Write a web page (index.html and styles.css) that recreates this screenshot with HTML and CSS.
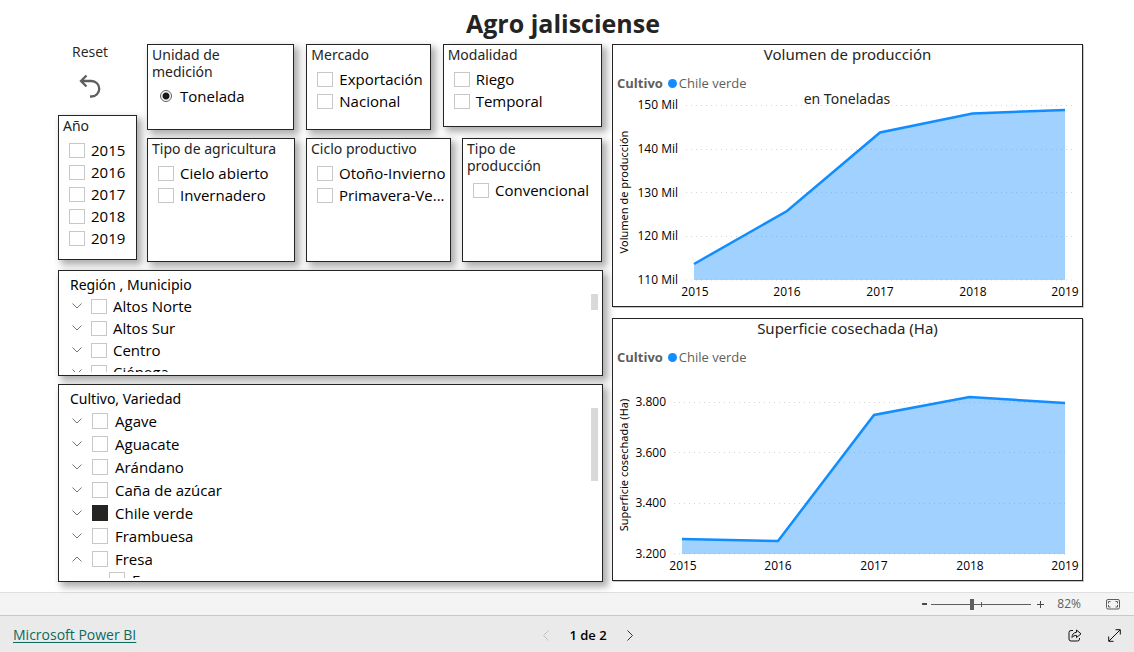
FILE: index.html
```html
<!DOCTYPE html>
<html lang="es">
<head>
<meta charset="utf-8">
<meta name="viewport" content="width=device-width, initial-scale=1">
<title>Agro jalisciense</title>
<link rel="stylesheet" href="styles.css">
</head>
<body>
<svg class="symbols" aria-hidden="true">
  <symbol id="chev" viewBox="0 0 10 6"><path d="M0.5 0.5 5 5 9.5 0.5" fill="none" stroke="currentColor"/></symbol>
</svg>
<main class="report">
  <h1 class="report-title">Agro jalisciense</h1>
  <div class="board">
    <div class="filters">
      <div class="top">
        <div class="side">
          <button class="reset" type="button">
            <span>Reset</span>
            <svg width="22" height="24" viewBox="0 0 22 24" fill="none" stroke="#605e5c" stroke-width="2.300"><path d="M7.500 1.500 2 7l5.500 5.500M2 7h10.500a7.500 7.500 0 0 1 0 15.500H11"/></svg>
          </button>
          <fieldset class="card year">
            <legend>Año</legend>
            <label class="opt"><input type="checkbox">2015</label>
            <label class="opt"><input type="checkbox">2016</label>
            <label class="opt"><input type="checkbox">2017</label>
            <label class="opt"><input type="checkbox">2018</label>
            <label class="opt"><input type="checkbox">2019</label>
          </fieldset>
        </div>
        <div class="slicers">
          <div class="row row-a">
            <fieldset class="card">
              <legend>Unidad de<br>medición</legend>
              <label class="opt"><input type="radio" name="unidad" checked>Tonelada</label>
            </fieldset>
            <fieldset class="card">
              <legend>Mercado</legend>
              <label class="opt"><input type="checkbox">Exportación</label>
              <label class="opt"><input type="checkbox">Nacional</label>
            </fieldset>
            <fieldset class="card short">
              <legend>Modalidad</legend>
              <label class="opt"><input type="checkbox">Riego</label>
              <label class="opt"><input type="checkbox">Temporal</label>
            </fieldset>
          </div>
          <div class="row row-b">
            <fieldset class="card">
              <legend>Tipo de agricultura</legend>
              <label class="opt"><input type="checkbox">Cielo abierto</label>
              <label class="opt"><input type="checkbox">Invernadero</label>
            </fieldset>
            <fieldset class="card">
              <legend>Ciclo productivo</legend>
              <label class="opt"><input type="checkbox">Otoño-Invierno</label>
              <label class="opt"><input type="checkbox">Primavera-Ve...</label>
            </fieldset>
            <fieldset class="card">
              <legend>Tipo de<br>producción</legend>
              <label class="opt"><input type="checkbox">Convencional</label>
            </fieldset>
          </div>
        </div>
      </div>
      <fieldset class="card tree region">
        <legend>Región , Municipio</legend>
        <div class="list">
          <label class="opt"><svg class="chev"><use href="#chev"/></svg><input type="checkbox">Altos Norte</label>
          <label class="opt"><svg class="chev"><use href="#chev"/></svg><input type="checkbox">Altos Sur</label>
          <label class="opt"><svg class="chev"><use href="#chev"/></svg><input type="checkbox">Centro</label>
          <label class="opt"><svg class="chev"><use href="#chev"/></svg><input type="checkbox">Ciénega</label>
        </div>
        <span class="thumb"></span>
      </fieldset>
      <fieldset class="card tree crop">
        <legend>Cultivo, Variedad</legend>
        <div class="list">
          <label class="opt"><svg class="chev"><use href="#chev"/></svg><input type="checkbox">Agave</label>
          <label class="opt"><svg class="chev"><use href="#chev"/></svg><input type="checkbox">Aguacate</label>
          <label class="opt"><svg class="chev"><use href="#chev"/></svg><input type="checkbox">Arándano</label>
          <label class="opt"><svg class="chev"><use href="#chev"/></svg><input type="checkbox">Caña de azúcar</label>
          <label class="opt"><svg class="chev"><use href="#chev"/></svg><input type="checkbox" checked>Chile verde</label>
          <label class="opt"><svg class="chev"><use href="#chev"/></svg><input type="checkbox">Frambuesa</label>
          <label class="opt"><svg class="chev open"><use href="#chev"/></svg><input type="checkbox">Fresa</label>
          <label class="opt child"><input type="checkbox">Fresa</label>
        </div>
        <span class="thumb"></span>
      </fieldset>
    </div>
    <div class="charts">
      <section class="chart">
        <h2>Volumen de producción</h2>
        <p class="key"><b>Cultivo</b><i class="dot"></i><span>Chile verde</span></p>
        <svg viewBox="0 0 469 211" role="img" aria-label="Volumen de producción en toneladas">
          <path class="grid" d="M73 10.500H459M73 54.500H459M73 97.500H459M73 141.500H459M73 185H459"/>
          <path class="area" d="M81 169 174 116 267 37.500 359.500 18.500 452 15V185H81Z"/>
          <path class="line" d="M81 169 174 116 267 37.500 359.500 18.500 452 15"/>
          <text class="sub" x="234" y="9">en Toneladas</text>
          <g class="ylab">
            <text x="65" y="14">150 Mil</text><text x="65" y="58">140 Mil</text><text x="65" y="102">130 Mil</text><text x="65" y="145">120 Mil</text><text x="65" y="189">110 Mil</text>
          </g>
          <g class="xlab">
            <text x="82" y="201">2015</text><text x="174" y="201">2016</text><text x="267" y="201">2017</text><text x="360" y="201">2018</text><text x="452" y="201">2019</text>
          </g>
          <text class="axis" transform="translate(15 97) rotate(-90)">Volumen de producción</text>
        </svg>
      </section>
      <section class="chart">
        <h2>Superficie cosechada (Ha)</h2>
        <p class="key"><b>Cultivo</b><i class="dot"></i><span>Chile verde</span></p>
        <svg viewBox="0 0 469 211" role="img" aria-label="Superficie cosechada en hectáreas">
          <path class="grid" d="M61 33.500H456M61 83.500H456M61 134.500H456M61 185H456"/>
          <path class="area" d="M69 170 165 172 261 46 356.500 28 452 34V185H69Z"/>
          <path class="line" d="M69 170 165 172 261 46 356.500 28 452 34"/>
          <g class="ylab">
            <text x="53" y="37">3.800</text><text x="53" y="88">3.600</text><text x="53" y="138">3.400</text><text x="53" y="189">3.200</text>
          </g>
          <g class="xlab">
            <text x="70" y="201">2015</text><text x="165" y="201">2016</text><text x="261" y="201">2017</text><text x="357" y="201">2018</text><text x="452" y="201">2019</text>
          </g>
          <text class="axis" transform="translate(15 96) rotate(-90)">Superficie cosechada (Ha)</text>
        </svg>
      </section>
    </div>
  </div>
</main>
<div class="zoombar">
  <button type="button" aria-label="Alejar"><svg width="5" height="10"><path d="M0 5h5" stroke="#4a4a4a" stroke-width="2"/></svg></button>
  <input class="zoom" type="range" min="0" max="100" value="40" aria-label="Zoom">
  <button type="button" aria-label="Acercar"><svg width="8" height="10"><path d="M0 5.500h7M3.500 2v7" stroke="#4a4a4a"/></svg></button>
  <output>82%</output>
  <button type="button" aria-label="Ajustar a la página"><svg width="14" height="11" fill="none" stroke="#605e5c"><rect x=".5" y=".5" width="13" height="9.500" rx="1.500"/><path d="M2.500 4.500v-2h2M9.500 2.500h2v2M11.500 6v2h-2M4.500 8h-2V6"/></svg></button>
</div>
<footer class="footer">
  <a href="#">Microsoft Power BI</a>
  <nav class="pager">
    <button type="button" disabled aria-label="Página anterior"><svg width="6" height="11" fill="none" stroke="#c0c0c0"><path d="M5.500.5.5 5.500l5 5"/></svg></button>
    <span>1 de 2</span>
    <button type="button" aria-label="Página siguiente"><svg width="6" height="11" fill="none" stroke="#333"><path d="m.5.5 5 5-5 5"/></svg></button>
  </nav>
  <div class="actions">
    <button type="button" aria-label="Compartir"><svg width="14" height="13" fill="none" stroke="#111"><path d="M5 1.500H3a2 2 0 0 0-2 2V10a2 2 0 0 0 2 2h6.500a2 2 0 0 0 2-2V9"/><path d="M8.500 1v2.300C5.500 3.600 4 5.500 4 8.500c1.200-1.500 2.500-2.100 4.500-2.100V8.600L13 4.800Z" stroke-linejoin="round"/></svg></button>
    <button type="button" aria-label="Pantalla completa"><svg width="13" height="13" fill="none" stroke="#111"><path d="M1 12 12 1M7.500.7h4.800v4.800M.7 7.500v4.800h4.800"/></svg></button>
  </div>
</footer>
</body>
</html>
```
FILE: styles.css
```css
* { box-sizing: border-box; }
body {
  margin: 0;
  min-height: 100vh;
  display: flex;
  flex-direction: column;
  background: #fff;
  color: #000;
  font: 15px/22px "Open Sans", "Noto Sans", sans-serif;
}
button { border: 0; padding: 0; background: none; font: inherit; color: inherit; display: flex; align-items: center; }
.symbols { display: none; }
.report { flex: 1; }
.report-title {
  margin: 0;
  padding: 7px 8px 5px 0;
  text-align: center;
  font-size: 25px;
  line-height: 32px;
  font-weight: 700;
  color: #252423;
}
.board {
  display: grid;
  grid-template-columns: 545fr 471fr;
  gap: 9px;
  align-items: start;
  padding: 0 51px 10px 58px;
}
.filters, .charts, .slicers { display: flex; flex-direction: column; min-width: 0; }
.filters { gap: 8px; }
.top { display: grid; grid-template-columns: 79fr 455fr; gap: 10px; padding-right: 1px; }
.side { display: flex; flex-direction: column; padding-bottom: 2px; }
.reset {
  height: 71px;
  flex-direction: column;
  align-items: center;
  justify-content: flex-start;
  gap: 14px;
  padding-right: 15px;
  font-size: 14px;
  line-height: 16px;
  color: #252423;
}
.slicers { gap: 8px; }
.row { display: grid; align-items: start; }
.row-a { grid-template-columns: 147fr 124fr 159fr; gap: 12px; }
.row-b { grid-template-columns: 148fr 145fr 140fr; gap: 11px; }
.card {
  position: relative;
  margin: 0;
  min-width: 0;
  border: 1px solid #252423;
  background: #fff;
  box-shadow: 4px 4px 7px 1px rgba(0, 0, 0, 0.32);
  padding: 1px 0 0 10px;
}
.row-a .card { min-height: 86px; }
.row-a .short { min-height: 83px; }
.row-b .card { min-height: 124px; }
.year { flex: 1; }
.card legend {
  float: left;
  width: 100%;
  padding: 0;
  margin: 0 0 5px -6px;
  font: 14px/17px "Noto Sans", sans-serif;
  color: #252423;
}
.card legend + * { clear: both; }
.opt { display: flex; align-items: center; white-space: nowrap; gap: 6px; height: 22px; }
.opt input {
  appearance: none;
  flex: none;
  margin: 0;
  width: 16px;
  height: 15px;
  border: 1px solid #c8c8c8;
  background: #fff;
}
.opt input:checked { background: #252423; border-color: #252423; }
.opt input[type="radio"] {
  width: 12px;
  height: 12px;
  margin: 0 2px;
  border-radius: 50%;
  border-color: #605e5c;
  background: radial-gradient(circle, #1b1a19 0 3px, #fff 4px);
}
.chev { width: 10px; height: 6px; flex: none; color: #777; margin-right: 3px; }
.chev.open { transform: rotate(180deg); }
.tree { padding: 5px 0 3px 13px; }
.tree legend { margin: 0 0 2px -2px; color: #000; }
.list { overflow: hidden; }
.region .list { height: 77px; }
.crop .list { height: 169px; }
.crop .opt { height: 23px; gap: 7px; }
.crop .opt input { height: 16px; }
.crop .child { height: 20px; padding-left: 37px; }
.thumb { position: absolute; right: 4px; width: 7px; background: #d9d9d9; }
.region .thumb { top: 23px; height: 16px; }
.crop .thumb { top: 23px; height: 73px; }

.charts { gap: 11px; position: relative; }
.chart { border: 1px solid #252423; background: #fff; box-shadow: 1px 1px 0 #c8c8c8; }
.chart h2 {
  margin: 0;
  text-align: center;
  font: 15px/18px "Noto Sans", sans-serif;
  color: #252423;
}
.key {
  margin: 0;
  padding: 10px 0 2px 4px;
  display: flex;
  align-items: center;
  font-size: 13px;
  line-height: 20px;
  color: #605e5c;
}
.dot { width: 9px; height: 9px; border-radius: 50%; background: #118dff; margin: 0 2px 0 5px; }
.chart svg { display: block; width: 100%; height: auto; overflow: visible; }
.chart text { font-size: 12px; }
.grid { stroke: #d5d5d5; stroke-dasharray: 1 4; fill: none; }
.area { fill: #118dff; fill-opacity: 0.4; }
.line { fill: none; stroke: #118dff; stroke-width: 2.5px; }
.ylab { text-anchor: end; }
.xlab, .chart .axis, .chart .sub { text-anchor: middle; }
.chart .axis { font: 11px "Noto Sans", sans-serif; }
.chart .sub { font: 14px "Noto Sans", sans-serif; fill: #252423; }

.zoombar {
  height: 24px;
  display: flex;
  align-items: center;
  justify-content: flex-end;
  padding-right: 14px;
  background: #f4f4f4;
  border-top: 1px solid #e0e0e0;
  border-bottom: 1px solid #c8c8c8;
}
.zoom {
  appearance: none;
  margin: 0 6px 0 4px;
  width: 100px;
  height: 11px;
  background:
    linear-gradient(#605e5c, #605e5c) 50px 3px / 1px 5px no-repeat,
    linear-gradient(#605e5c, #605e5c) 0 5px / 100% 1px no-repeat;
}
.zoom::-webkit-slider-thumb { appearance: none; width: 4px; height: 11px; background: #605e5c; }
.zoombar output { margin: 0 25px 0 12px; font-size: 12px; line-height: 16px; color: #605e5c; }
.footer {
  height: 36px;
  display: grid;
  grid-template-columns: 1fr auto 1fr;
  align-items: center;
  padding: 2px 13px 0;
  background: #eaeaea;
}
.footer a { color: #0b6a60; font-size: 14px; text-underline-offset: 2px; }
.pager { display: flex; align-items: center; gap: 20px; margin-left: 42px; font-weight: 600; font-size: 13px; }
.actions { display: flex; justify-content: flex-end; gap: 26px; }
```
